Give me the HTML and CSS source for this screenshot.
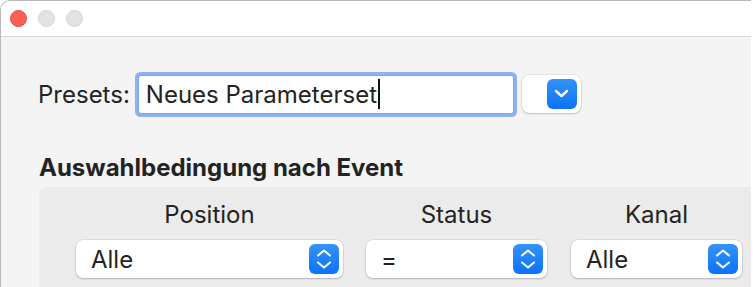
FILE: index.html
```html
<!DOCTYPE html>
<html lang="de">
<head>
  <meta charset="UTF-8" />
  <title>Parameterset</title>
  <link rel="stylesheet" href="styles.css">
</head>
<body>

  <div class="window">
    <div class="titlebar">
      <span class="light red"></span>
      <span class="light"></span>
      <span class="light"></span>
    </div>

    <div class="content">
      <div class="presets">
        <span class="label">Presets:</span>
        <div class="field">Neues Parameterset<span class="caret"></span></div>
        <div class="menu-btn">
          <span class="blue-box">
            <svg width="30" height="30" viewBox="0 0 30 30"><path d="M9 12 L14.5 17 L20 12" /></svg>
          </span>
        </div>
      </div>

      <h2 class="section-title">Auswahlbedingung nach Event</h2>

      <div class="group">
        <div class="col col-pos">
          <div class="col-title">Position</div>
          <div class="popup">
            <span class="popup-text">Alle</span>
            <span class="blue-box stepper">
              <svg width="30" height="30" viewBox="0 0 30 30"><path d="M9 11.5 L15 6.5 L21 11.5 M9 18.5 L15 23.5 L21 18.5" /></svg>
            </span>
          </div>
        </div>
        <div class="col col-status">
          <div class="col-title">Status</div>
          <div class="popup">
            <span class="popup-text">=</span>
            <span class="blue-box stepper">
              <svg width="30" height="30" viewBox="0 0 30 30"><path d="M9 11.5 L15 6.5 L21 11.5 M9 18.5 L15 23.5 L21 18.5" /></svg>
            </span>
          </div>
        </div>
        <div class="col col-kanal">
          <div class="col-title">Kanal</div>
          <div class="popup">
            <span class="popup-text">Alle</span>
            <span class="blue-box stepper">
              <svg width="30" height="30" viewBox="0 0 30 30"><path d="M9 11.5 L15 6.5 L21 11.5 M9 18.5 L15 23.5 L21 18.5" /></svg>
            </span>
          </div>
        </div>
      </div>
    </div>
  </div>

</body>
</html>
```

FILE: styles.css
```css
body {
  margin: 0;
  background: #ffffff;
  font-family: Inter, "Noto Sans", sans-serif;
  color: #232323;
}

.window {
  width: 750px;
  height: 300px;
  border-top: 1px solid #b9b9b9;
  border-left: 1px solid #b9b9b9;
  border-radius: 10px 0 0 0;
  background: #f4f4f4;
  overflow: hidden;
}

.titlebar {
  height: 35px;
  background: #ffffff;
  border-bottom: 1px solid #dadada;
  display: flex;
  align-items: center;
  gap: 11px;
  padding-left: 9px;
}

.light {
  width: 15px;
  height: 15px;
  border-radius: 50%;
  background: #e3e3e3;
  border: 1px solid #d2d2d2;
}

.light.red {
  background: #fe5f57;
  border-color: #e9483f;
}

/* content */
.content {
  padding: 38px 0 0 37px;
}

.presets {
  display: flex;
  align-items: center;
  height: 38px;
}

.label {
  font-size: 24px;
  margin-right: 9px;
}

.field {
  width: 367px;
  height: 37px;
  padding-left: 7px;
  background: #ffffff;
  border-radius: 2px;
  box-shadow: 0 0 0 1px #7ea6ec, 0 0 0 4px #8db2f0;
  font-size: 24px;
  line-height: 37px;
  display: flex;
  align-items: center;
}

.caret {
  width: 2px;
  height: 30px;
  background: #111;
  margin-left: 1px;
}

.menu-btn {
  width: 59px;
  height: 38px;
  margin-left: 9px;
  background: #ffffff;
  border-radius: 7px;
  box-shadow: 0 0 0 0.5px rgba(0, 0, 0, 0.12), 0 1px 2px rgba(0, 0, 0, 0.18);
  display: flex;
  align-items: center;
  justify-content: flex-end;
  padding-right: 4px;
  box-sizing: border-box;
}

.blue-box {
  width: 30px;
  height: 30px;
  border-radius: 6px;
  background: linear-gradient(#3592fc, #0b73f6);
  display: block;
}

.blue-box svg {
  display: block;
}

.blue-box path {
  fill: none;
  stroke: #ffffff;
  stroke-width: 2.4;
  stroke-linecap: round;
  stroke-linejoin: round;
}

.stepper path {
  stroke-width: 2;
}

.section-title {
  margin: 41px 0 0 1px;
  font-size: 24px;
  line-height: 28px;
  font-weight: 700;
}

.group {
  margin: 5px 0 0 1px;
  background: #ebebeb;
  border-radius: 8px 0 0 0;
  padding: 14px 0 20px 37px;
  display: flex;
  gap: 23px;
}

.col {
  display: flex;
  flex-direction: column;
  align-items: center;
}

.col-pos { width: 267px; }
.col-status { width: 181px; }
.col-kanal { width: 171px; margin-left: 1px; }

.col-title {
  font-size: 24px;
  line-height: 28px;
  margin-bottom: 11px;
}

.popup {
  width: 100%;
  height: 38px;
  background: #ffffff;
  border-radius: 7px;
  box-shadow: 0 0 0 0.5px rgba(0, 0, 0, 0.12), 0 1px 2px rgba(0, 0, 0, 0.2);
  display: flex;
  align-items: center;
  justify-content: space-between;
  padding: 0 4px 0 15px;
  box-sizing: border-box;
}

.popup-text {
  font-size: 24px;
}
```
